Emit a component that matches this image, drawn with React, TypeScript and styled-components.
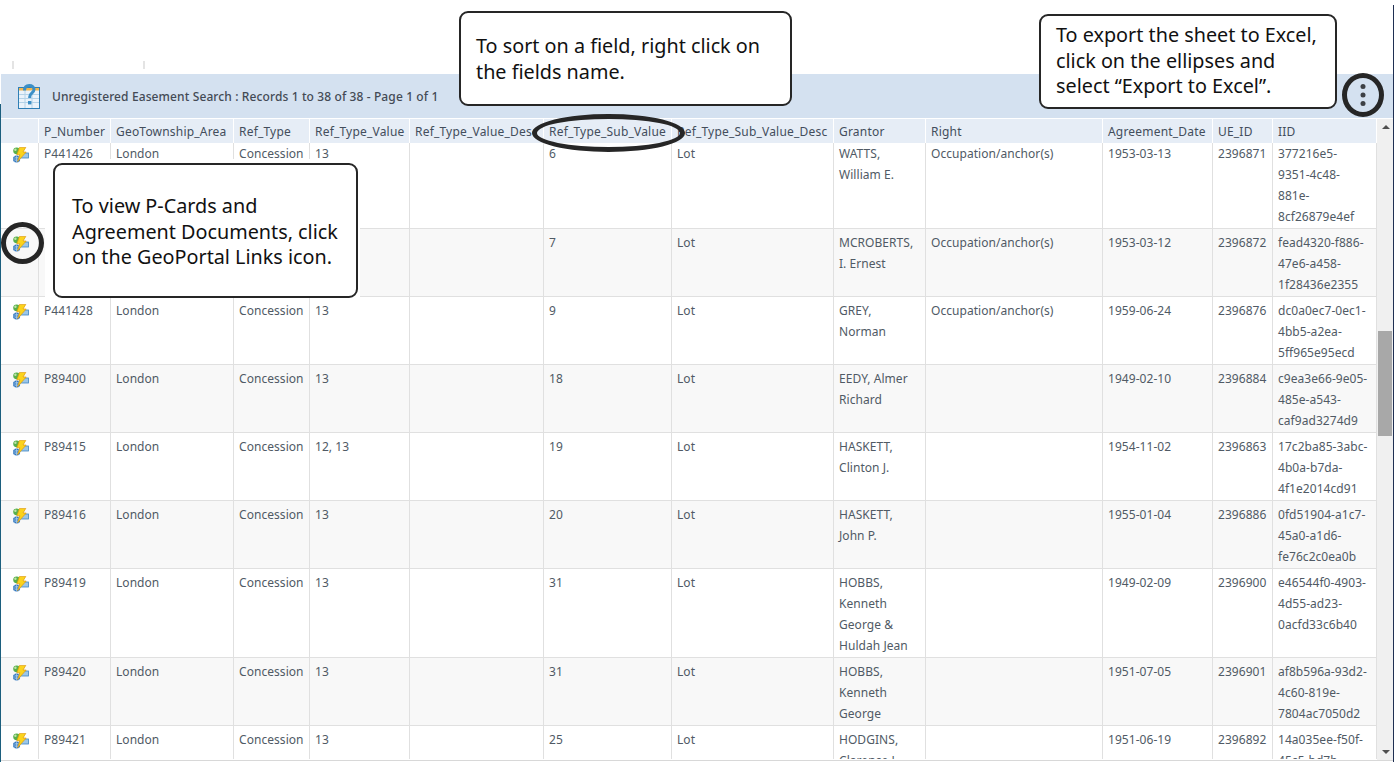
import React from "react";
import styled, { createGlobalStyle } from "styled-components";

const Global = createGlobalStyle`
  html, body { margin: 0; padding: 0; background: #fff; }
  body { font-family: "Noto Sans", "Open Sans", "Liberation Sans", sans-serif; overflow: hidden; }
`;

const Page = styled.div`
  position: relative;
  width: 1394px;
  height: 762px;
  overflow: hidden;
  display: flex;
  flex-direction: column;
  background: #fff;
`;

const TopStrip = styled.div`
  height: 74px;
  padding: 61px 0 0 12px;
  box-sizing: border-box;
`;

const TabStub = styled.div`
  width: 129px;
  height: 8px;
  border-left: 2px solid #e4e4e4;
  border-right: 2px solid #e4e4e4;
`;

const TitleBar = styled.div`
  height: 44px;
  margin-left: 1px;
  padding-left: 16px;
  display: flex;
  align-items: center;
  gap: 11px;
  background: #d4e1f0;
  border-bottom: 1px solid #fff;
`;

const Title = styled.span`
  font-size: 12px;
  font-weight: 500;
  color: #434a55;
  letter-spacing: 0.115px;
  white-space: nowrap;
`;

const GridArea = styled.div`
  display: flex;
  height: 641px;
  border-bottom: 1px solid #d8d8d8;
`;

const Viewport = styled.div`
  width: 1377px;
  height: 640px;
  overflow: hidden;
  flex: none;
`;

const Table = styled.table`
  table-layout: fixed;
  width: 1377px;
  border-collapse: separate;
  border-spacing: 0;
  font-size: 12px;
`;

const Th = styled.th`
  height: 24px;
  padding: 1px 0 0 5px;
  box-sizing: border-box;
  text-align: left;
  font-weight: 400;
  letter-spacing: 0.2px;
  color: #434d5c;
  background: #e6edf6;
  border-right: 1px solid #fff;
  white-space: nowrap;
  overflow: hidden;
`;

const Row = styled.tr<{ $alt: boolean }>`
  background: ${(p) => (p.$alt ? "#f8f8f8" : "#fff")};
  &:first-child td { padding-top: 0; }
`;

const Td = styled.td`
  padding: 3px 0 1px 5px;
  vertical-align: top;
  line-height: 21px;
  letter-spacing: 0.05px;
  color: #505a65;
  border-right: 1px solid #e0e0e0;
  border-bottom: 1px solid #e0e0e0;
  white-space: pre;
  overflow: hidden;
`;

const IconCell = styled(Td)`
  padding-left: 12px;
  line-height: 0;
  & svg { margin-top: 4px; }
`;

const Scrollbar = styled.div`
  width: 16px;
  flex: none;
  display: flex;
  flex-direction: column;
  background: #f0f0f0;
`;

const ScrollArrow = styled.div<{ $down?: boolean }>`
  height: 16px;
  display: flex;
  align-items: center;
  justify-content: center;
  margin-left: 2px;
  &::before {
    content: "";
    border-left: 4px solid transparent;
    border-right: 4px solid transparent;
    ${(p) => (p.$down ? "border-top: 4px solid #505050;" : "border-bottom: 4px solid #505050;")}
  }
`;

const ScrollTrack = styled.div`
  flex: 1;
  padding: 196px 1px 0 1px;
`;

const ScrollThumb = styled.div`
  height: 105px;
  background: #a8a8a8;
`;

const Callout = styled.div<{ $x: number; $y: number; $w: number; $h: number; $pt: number; $pl: number }>`
  position: absolute;
  left: ${(p) => p.$x}px;
  top: ${(p) => p.$y}px;
  width: ${(p) => p.$w}px;
  height: ${(p) => p.$h}px;
  padding: ${(p) => p.$pt}px 0 0 ${(p) => p.$pl}px;
  box-sizing: border-box;
  border: 2px solid #262626;
  border-radius: 9px;
  background: #fff;
  color: #111;
  font-size: 19.8px;
  line-height: 25.6px;
  white-space: pre;
`;

const Patch = styled.div`
  position: absolute;
  left: 45px;
  top: 159px;
  width: 315px;
  height: 139px;
  background: #fff;
`;

const Ring = styled.div<{ $x: number; $y: number; $w: number; $h: number }>`
  position: absolute;
  left: ${(p) => p.$x}px;
  top: ${(p) => p.$y}px;
  width: ${(p) => p.$w}px;
  height: ${(p) => p.$h}px;
  box-sizing: border-box;
  border: 5px solid #262626;
  border-radius: 50%;
  display: flex;
  align-items: center;
  justify-content: center;
`;

const EdgeLine = styled.div<{ $side: "left" | "right"; $top: number; $color: string }>`
  position: absolute;
  ${(p) => p.$side}: 0;
  top: ${(p) => p.$top}px;
  bottom: 0;
  width: 1px;
  background: ${(p) => p.$color};
`;

const SheetIcon = () => (
  <svg width="24" height="27" viewBox="0 0 24 27" style={{ flex: "none" }}>
    <rect x="1.5" y="4.5" width="21" height="21" fill="#eaf3fa" stroke="#2f7fb5" />
    <rect x="2" y="5" width="20" height="2.5" fill="#f2b64d" />
    <path d="M2 11.5h20M2 15.5h20M2 19.5h20M8 7v18M15 7v18" stroke="#b4d3e8" strokeWidth="1" fill="none" />
    <path d="M7.5 7.5c0-3.5 2.2-5 4.8-5 2.8 0 4.7 1.6 4.7 4 0 3.7-4.3 3.6-4.3 7.2v1.3" stroke="#3b8fc6" strokeWidth="3" fill="none" />
    <rect x="11" y="18" width="3.4" height="3.4" fill="#3b8fc6" />
  </svg>
);

const GeoIcon = () => (
  <svg width="17" height="16" viewBox="0 0 17 16">
    <rect x="8" y="6" width="8.5" height="5" fill="#9cc6e8" stroke="#3f86c4" strokeWidth="0.8" />
    <circle cx="4.6" cy="3.8" r="3.4" fill="#58b04a" />
    <circle cx="3.4" cy="2.8" r="1.2" fill="#bfe3a8" />
    <circle cx="4.6" cy="12" r="3.6" fill="#2f73bd" />
    <path d="M1 12h7M4.6 8.4v7.2M2 9.6c2 1.4 3.4 1.4 5.4 0M2 14.4c2-1.4 3.4-1.4 5.4 0" stroke="#b5d5ef" strokeWidth="0.7" fill="none" />
    <path d="M7.5 0.4h6.3L11 5h3.2L5.6 14.6l2.3-6.8H4.8z" fill="#fbd31c" stroke="#e09a0c" strokeWidth="0.7" />
  </svg>
);

const Kebab = () => (
  <svg width="8" height="24" viewBox="0 0 8 24">
    <circle cx="4" cy="3.5" r="2.5" fill="#3d4045" />
    <circle cx="4" cy="12" r="2.5" fill="#3d4045" />
    <circle cx="4" cy="20.5" r="2.5" fill="#3d4045" />
  </svg>
);

const columns: [string, number][] = [
  ["", 39],
  ["P_Number", 72],
  ["GeoTownship_Area", 123],
  ["Ref_Type", 76],
  ["Ref_Type_Value", 100],
  ["Ref_Type_Value_Desc", 134],
  ["Ref_Type_Sub_Value", 128],
  ["Ref_Type_Sub_Value_Desc", 162],
  ["Grantor", 92],
  ["Right", 177],
  ["Agreement_Date", 110],
  ["UE_ID", 60],
  ["IID", 104],
];

const occ = "Occupation/anchor(s)";
const rows: string[][] = [
  ["P441426", "London", "Concession", "13", "", "6", "Lot", "WATTS,\nWilliam E.", occ, "1953-03-13", "2396871", "377216e5-\n9351-4c48-\n881e-\n8cf26879e4ef"],
  ["", "", "", "", "", "7", "Lot", "MCROBERTS,\nI. Ernest", occ, "1953-03-12", "2396872", "fead4320-f886-\n47e6-a458-\n1f28436e2355"],
  ["P441428", "London", "Concession", "13", "", "9", "Lot", "GREY,\nNorman", occ, "1959-06-24", "2396876", "dc0a0ec7-0ec1-\n4bb5-a2ea-\n5ff965e95ecd"],
  ["P89400", "London", "Concession", "13", "", "18", "Lot", "EEDY, Almer\nRichard", "", "1949-02-10", "2396884", "c9ea3e66-9e05-\n485e-a543-\ncaf9ad3274d9"],
  ["P89415", "London", "Concession", "12, 13", "", "19", "Lot", "HASKETT,\nClinton J.", "", "1954-11-02", "2396863", "17c2ba85-3abc-\n4b0a-b7da-\n4f1e2014cd91"],
  ["P89416", "London", "Concession", "13", "", "20", "Lot", "HASKETT,\nJohn P.", "", "1955-01-04", "2396886", "0fd51904-a1c7-\n45a0-a1d6-\nfe76c2c0ea0b"],
  ["P89419", "London", "Concession", "13", "", "31", "Lot", "HOBBS,\nKenneth\nGeorge &\nHuldah Jean", "", "1949-02-09", "2396900", "e46544f0-4903-\n4d55-ad23-\n0acfd33c6b40"],
  ["P89420", "London", "Concession", "13", "", "31", "Lot", "HOBBS,\nKenneth\nGeorge", "", "1951-07-05", "2396901", "af8b596a-93d2-\n4c60-819e-\n7804ac7050d2"],
  ["P89421", "London", "Concession", "13", "", "25", "Lot", "HODGINS,\nClarence J.", "", "1951-06-19", "2396892", "14a035ee-f50f-\n45c5-bd7b-\n"],
];

export default function App() {
  return (
    <Page>
      <Global />
      <TopStrip>
        <TabStub />
      </TopStrip>
      <TitleBar>
        <SheetIcon />
        <Title>Unregistered Easement Search : Records 1 to 38 of 38 - Page 1 of 1</Title>
      </TitleBar>
      <GridArea>
        <Viewport>
          <Table>
            <colgroup>
              {columns.map(([name, w], i) => (
                <col key={i} style={{ width: w }} />
              ))}
            </colgroup>
            <thead>
              <tr>
                {columns.map(([name], i) => (
                  <Th key={i}>{name}</Th>
                ))}
              </tr>
            </thead>
            <tbody>
              {rows.map((r, i) => (
                <Row key={i} $alt={i % 2 === 1}>
                  <IconCell>
                    <GeoIcon />
                  </IconCell>
                  {r.map((c, j) => (
                    <Td key={j}>{c}</Td>
                  ))}
                </Row>
              ))}
            </tbody>
          </Table>
        </Viewport>
        <Scrollbar>
          <ScrollArrow />
          <ScrollTrack>
            <ScrollThumb />
          </ScrollTrack>
          <ScrollArrow $down />
        </Scrollbar>
      </GridArea>

      <EdgeLine $side="left" $top={104} $color="#1c5f7e" />
      <EdgeLine $side="right" $top={5} $color="#1f2f52" />

      <Ring $x={532} $y={114} $w={153} $h={38} />
      <Ring $x={1342} $y={73} $w={42} $h={44}>
        <Kebab />
      </Ring>
      <Ring $x={1} $y={222} $w={43} $h={42} />

      <Callout $x={459} $y={11} $w={333} $h={95} $pt={20} $pl={15}>{"To sort on a field, right click on\nthe fields name."}</Callout>
      <Callout $x={1039} $y={14} $w={298} $h={95} $pt={6} $pl={15}>{"To export the sheet to Excel,\nclick on the ellipses and\nselect \u201cExport to Excel\u201d."}</Callout>
      <Patch />
      <Callout $x={53} $y={163} $w={305} $h={135} $pt={28} $pl={17}>{"To view P-Cards and\nAgreement Documents, click\non the GeoPortal Links icon."}</Callout>
    </Page>
  );
}
